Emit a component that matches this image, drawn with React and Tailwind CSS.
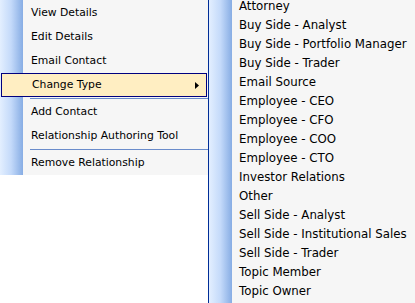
import React from 'react'

const mainItems = [
  { label: 'View Details' },
  { label: 'Edit Details' },
  { label: 'Email Contact' },
  { label: 'Change Type', active: true, sub: true },
  { sep: true },
  { label: 'Add Contact' },
  { label: 'Relationship Authoring Tool' },
  { sep: true },
  { label: 'Remove Relationship' },
]

const types = [
  'Attorney',
  'Buy Side - Analyst',
  'Buy Side - Portfolio Manager',
  'Buy Side - Trader',
  'Email Source',
  'Employee - CEO',
  'Employee - CFO',
  'Employee - COO',
  'Employee - CTO',
  'Investor Relations',
  'Other',
  'Sell Side - Analyst',
  'Sell Side - Institutional Sales',
  'Sell Side - Trader',
  'Topic Member',
  'Topic Owner',
]

const font = { fontFamily: '"DejaVu Sans", Tahoma, sans-serif' }

const App = () => {
  return (
    <div className='w-[415px] h-[303px] bg-white flex items-start overflow-hidden' style={font}>
      {/* context menu */}
      <div className='w-[208px] pt-[1px] text-[10.8px] text-black bg-[linear-gradient(to_right,#e3efff_0px,#c4dafa_11px,#87ade4_23px,#f6f6f6_23px)]'>
        {mainItems.map((item, i) =>
          item.sep ? (
            <div key={i} className='h-[3px] flex items-center'>
              <div className='ml-[30px] flex-1 h-px bg-[#6a8ccb]'></div>
            </div>
          ) : item.active ? (
            <div key={i} className='mx-[1px] h-[24px] flex items-center justify-between border border-[#000080] bg-[#ffeec2] pl-[30px] pr-[7px]'>
              <span>{item.label}</span>
              <svg width='4' height='7' viewBox='0 0 4 7'>
                <path d='M0 0 L4 3.5 L0 7 Z' fill='#000' />
              </svg>
            </div>
          ) : (
            <div key={i} className='h-[24px] flex items-center pl-[31px]'>
              {item.label}
            </div>
          )
        )}
      </div>

      {/* sub menu */}
      <div className='flex-1 h-[303px] border-l border-[#002d96] flex overflow-hidden bg-[#f6f6f6]'>
        <div className='w-[23px] h-full bg-[linear-gradient(to_right,#e3efff,#c4dafa,#87ade4)]'></div>
        <div className='flex-1 -mt-[3px] pl-[7px] text-[11.8px] text-black'>
          {types.map((t) => (
            <div key={t} className='h-[19px] flex items-center whitespace-nowrap'>{t}</div>
          ))}
        </div>
      </div>
    </div>
  )
}

export default App
